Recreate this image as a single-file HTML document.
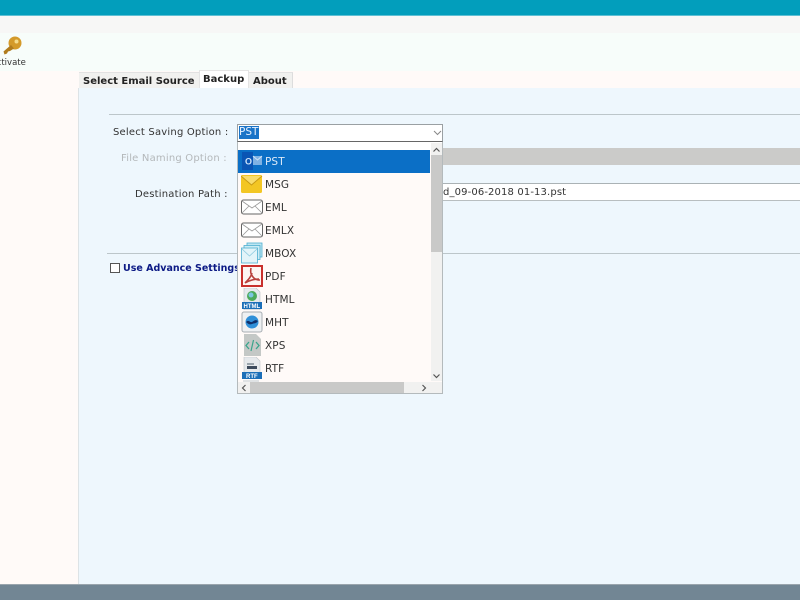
<!DOCTYPE html>
<html><head><meta charset="utf-8">
<style>
html,body{margin:0;padding:0;width:800px;height:600px;overflow:hidden;background:#fffaf8}
body{position:relative;font-family:"DejaVu Sans","Liberation Sans",sans-serif;font-size:10px;color:#333}
.a{position:absolute}
.t{position:absolute;white-space:nowrap;line-height:14px}
.b{font-weight:bold;color:#222}
.i{position:absolute;left:241px;width:22px;height:22px}
.o{position:absolute;left:265px;white-space:nowrap;line-height:14px;color:#333;font-size:10.5px;letter-spacing:.1px}
</style></head><body>
<div class="a" style="left:0;top:0;width:800px;height:15px;background:#029ebc"></div>
<div class="a" style="left:0;top:15px;width:800px;height:1px;background:#5fc0d4"></div>
<div class="a" style="left:0;top:16px;width:800px;height:17px;background:#f7f7f6"></div>
<div class="a" style="left:0;top:33px;width:800px;height:38px;background:#f7fdfa"></div>
<svg class="a" style="left:2px;top:36px" width="20" height="20" viewBox="0 0 20 20"><circle cx="13" cy="7" r="6.500" fill="#d49a2a"/><circle cx="14.500" cy="5.500" r="2" fill="#f5dc8c"/><path d="M9 9 L1.500 15.500 L2.500 18.500 L5 17.500 L6 15.500 L8 15 L12 12.500z" fill="#b07c1e"/></svg>
<div class="t" style="left:-9px;top:57px;font-size:8.5px;line-height:12px">Activate</div>

<div class="a" style="left:78px;top:88px;width:722px;height:496px;background:#eef7fd;border-left:1px solid #dde3e6;box-sizing:border-box"></div>
<div class="a" style="left:79px;top:72px;width:120px;height:16px;background:#f1f1ef;border-top:1px solid #e2e2e2;box-sizing:border-box"></div>
<div class="a" style="left:199px;top:70px;width:50px;height:18px;background:#fff;border:1px solid #e4e4e4;border-bottom:none;box-sizing:border-box"></div>
<div class="a" style="left:249px;top:72px;width:44px;height:16px;background:#f1f1ef;border-top:1px solid #e2e2e2;border-right:1px solid #ddd;box-sizing:border-box"></div>
<div class="t b" style="left:83px;top:75px;font-size:10px">Select Email Source</div>
<div class="t b" style="left:203px;top:73px;font-size:10px">Backup</div>
<div class="t b" style="left:253px;top:75px;font-size:10px">About</div>

<div class="a" style="left:109px;top:114px;width:691px;height:1px;background:#bcc6ca"></div>
<div class="a" style="left:107px;top:253px;width:693px;height:1px;background:#bcc6ca"></div>

<div class="t" style="left:113px;top:126px;letter-spacing:.2px">Select Saving Option :</div>
<div class="t" style="left:121px;top:152px;color:#b4b8ba;letter-spacing:.2px">File Naming Option :</div>
<div class="t" style="left:135px;top:188px;letter-spacing:.2px">Destination Path :</div>

<div class="a" style="left:430px;top:148px;width:370px;height:17px;background:#cbcbc9"></div>
<div class="a" style="left:430px;top:183px;width:370px;height:18px;background:#fff;border-top:1px solid #aab2b5;border-bottom:1px solid #b8bec0;box-sizing:border-box"></div>
<div class="t" style="left:443px;top:186px;font-size:10px;letter-spacing:.13px">d_09-06-2018 01-13.pst</div>

<div class="a" style="left:110px;top:263px;width:8px;height:8px;border:1px solid #555;background:#fff"></div>
<div class="t" style="left:123px;top:262px;font-weight:bold;color:#0c1a85;font-size:9.5px">Use Advance Settings</div>

<!-- combo -->
<div class="a" style="left:237px;top:124px;width:206px;height:18px;background:#fff;border:1px solid #9aa0a3;border-bottom-color:#666;box-sizing:border-box"></div>
<div class="a" style="left:239px;top:126px;width:20px;height:13px;background:#1a74c8"></div>
<div class="t" style="left:239px;top:125px;color:#e8f2ff;font-size:10.5px">PST</div>
<svg class="a" style="left:433px;top:130px" width="9" height="6" viewBox="0 0 9 6"><path d="M1 1l3.500 3.500L8 1" fill="none" stroke="#888" stroke-width="1"/></svg>

<!-- dropdown -->
<div class="a" style="left:237px;top:142px;width:206px;height:252px;background:#fffaf8;border:1px solid #b4babc;border-top:none;box-sizing:border-box"></div>
<div class="a" style="left:238px;top:142px;width:204px;height:8px;background:#fff"></div>
<div class="a" style="left:238px;top:150px;width:192px;height:23px;background:#0b6fc6"></div>
<!-- v scrollbar -->
<div class="a" style="left:431px;top:143px;width:11px;height:238px;background:#f1f1f0"></div>
<div class="a" style="left:431px;top:155px;width:11px;height:97px;background:#c9c9c8"></div>
<svg class="a" style="left:432px;top:147px" width="9" height="6" viewBox="0 0 9 6"><path d="M1.500 4.500l3-3 3 3" fill="none" stroke="#555" stroke-width="1.2"/></svg>
<svg class="a" style="left:432px;top:373px" width="9" height="6" viewBox="0 0 9 6"><path d="M1.500 1.500l3 3 3-3" fill="none" stroke="#555" stroke-width="1.2"/></svg>
<!-- h scrollbar -->
<div class="a" style="left:238px;top:382px;width:204px;height:11px;background:#f1f1f0"></div>
<div class="a" style="left:250px;top:382px;width:154px;height:11px;background:#c9c9c8"></div>
<svg class="a" style="left:241px;top:384px" width="6" height="8" viewBox="0 0 6 8"><path d="M4.500 1l-3 3 3 3" fill="none" stroke="#555" stroke-width="1.2"/></svg>
<svg class="a" style="left:421px;top:384px" width="6" height="8" viewBox="0 0 6 8"><path d="M1.500 1l3 3-3 3" fill="none" stroke="#555" stroke-width="1.2"/></svg>

<!-- icons -->
<svg class="i" style="top:150px" viewBox="0 0 22 22"><rect x="1" y="2" width="11" height="18" fill="#0a55b4"/><rect x="12" y="6" width="9" height="9" fill="#7fb2e4"/><path d="M12 6l4.500 4L21 6" fill="none" stroke="#cfe2f5" stroke-width="1"/><text x="4" y="14.500" font-size="9" font-weight="bold" fill="#cfe4fa" font-family="Liberation Sans">O</text></svg>
<svg class="i" style="top:173px" viewBox="0 0 22 22"><rect x="0" y="2" width="21" height="18" rx="1.500" fill="#f3c623"/><path d="M0 3l10.500 9L21 3" fill="#f9dd6b" stroke="#c89a14" stroke-width="1"/></svg>
<svg class="i" style="top:196px" viewBox="0 0 22 22"><rect x=".5" y="4" width="21" height="14" rx="2" fill="#fff" stroke="#666"/><path d="M1 5l10 7 10-7M1 17l7-7M21 17l-7-7" fill="none" stroke="#999" stroke-width=".8"/></svg>
<svg class="i" style="top:219px" viewBox="0 0 22 22"><rect x=".5" y="4" width="21" height="14" rx="2" fill="#fff" stroke="#666"/><path d="M1 5l10 7 10-7M1 17l7-7M21 17l-7-7" fill="none" stroke="#999" stroke-width=".8"/></svg>
<svg class="i" style="top:242px" viewBox="0 0 22 22"><rect x="6" y="1" width="15" height="14" fill="#bfe6f2" stroke="#4eaed0" stroke-width=".8"/><rect x="3" y="3.500" width="16" height="14" fill="#cdecf5" stroke="#4eaed0" stroke-width=".8"/><rect x=".5" y="6" width="16" height="15" fill="#e3f4f9" stroke="#4eaed0" stroke-width=".8"/><path d="M1 7l7.500 7 7.500-7" fill="none" stroke="#8fcbe0" stroke-width=".8"/></svg>
<svg class="i" style="top:265px" viewBox="0 0 22 22"><rect x="1" y="1" width="20" height="20" fill="#fdf5f2" stroke="#c9302c" stroke-width="2"/><path d="M10 3c-1 5 .5 7 2 9s4 3 7 3M11 8c-1 4-4 7-7 10M4 18c3-2 9-4 14-4" fill="none" stroke="#b8403c" stroke-width="1.600"/></svg>
<svg class="i" style="top:288px" viewBox="0 0 22 22"><path d="M3 0h12l4 4v18H3z" fill="#e6e9ec" stroke="#b9bfc4" stroke-width=".6"/><circle cx="11" cy="8" r="5" fill="#4caa5a"/><circle cx="10" cy="7" r="2.500" fill="#7cc6e0"/><rect x="1" y="14" width="20" height="7" fill="#1c6fb8"/><text x="2.500" y="20" font-size="6" font-weight="bold" fill="#fff" font-family="Liberation Sans">HTML</text></svg>
<svg class="i" style="top:311px" viewBox="0 0 22 22"><rect x="1" y="1" width="20" height="20" rx="2" fill="#eef0f2" stroke="#a8aeb3"/><circle cx="11" cy="11" r="6.500" fill="#2f8fd8"/><path d="M5 11c3-3 4 1 6 0s3-3 6-1c-2 3-4 2-6 3s-4 0-6-2z" fill="#0f2f6a"/></svg>
<svg class="i" style="top:334px" viewBox="0 0 22 22"><path d="M3 0h12l5 5v17H3z" fill="#c4c8c6"/><path d="M8 8l-3 3.500 3 3.500" fill="none" stroke="#3aa58c" stroke-width="1.300"/><path d="M15 8l3 3.500-3 3.500" fill="none" stroke="#3aa58c" stroke-width="1.300"/><path d="M12.500 6l-2.500 11" fill="none" stroke="#3aa58c" stroke-width="1.200"/></svg>
<svg class="i" style="top:357px" viewBox="0 0 22 22"><path d="M3 0h12l4 4v18H3z" fill="#e6e9ec" stroke="#c0c5c9" stroke-width=".6"/><rect x="6" y="6" width="7" height="2" fill="#9aa4ac"/><rect x="6" y="9" width="10" height="3" fill="#3c4a5c"/><rect x="1" y="15" width="20" height="7" fill="#1c6fb8"/><text x="5" y="21" font-size="6" font-weight="bold" fill="#fff" font-family="Liberation Sans">RTF</text></svg>
<div class="a" style="left:243px;top:380px;width:16px;height:2px;background:#dfe2e4"></div>

<div class="o" style="top:155px;color:#dbe9f8">PST</div>
<div class="o" style="top:178px">MSG</div>
<div class="o" style="top:201px">EML</div>
<div class="o" style="top:224px">EMLX</div>
<div class="o" style="top:247px">MBOX</div>
<div class="o" style="top:270px">PDF</div>
<div class="o" style="top:293px">HTML</div>
<div class="o" style="top:316px">MHT</div>
<div class="o" style="top:339px">XPS</div>
<div class="o" style="top:362px">RTF</div>

<div class="a" style="left:0;top:584px;width:800px;height:1px;background:#9aa5ad"></div>
<div class="a" style="left:0;top:585px;width:800px;height:15px;background:#728694"></div>
</body></html>
